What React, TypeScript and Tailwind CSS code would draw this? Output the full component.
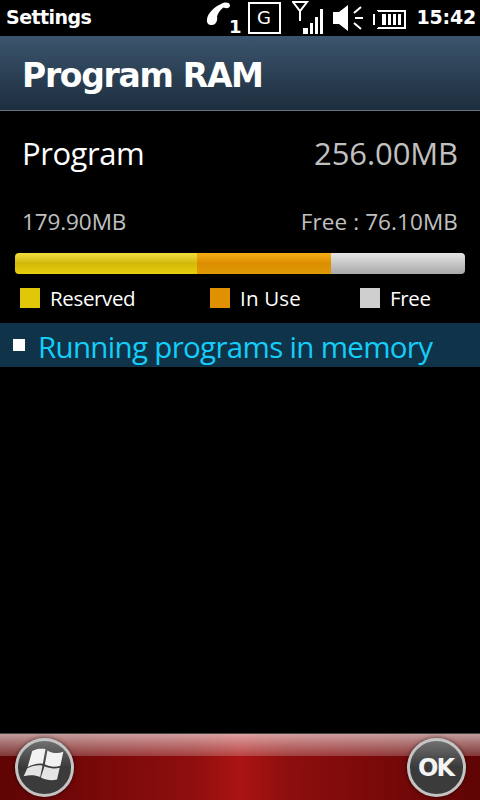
export default function App() {
  return (
    <div className="w-[480px] h-[800px] bg-black flex flex-col overflow-hidden font-['Open_Sans',sans-serif] text-white">
      {/* status bar */}
      <div className="h-[36px] flex items-center justify-between pl-[6px] pr-[4px] shrink-0">
        <span className="font-['DejaVu_Sans',sans-serif] font-bold text-[19px] leading-none tracking-[-0.55px] mb-[2px] text-white">Settings</span>
        <div className="flex items-center h-full">
          <svg width="36" height="36" viewBox="0 0 36 36" className="mr-[7px]">
            <path d="M16 4 C20 2 24 2 25 5 C25.5 8 22 9 18.5 7.5 C15 10 13 13 12 16.5 C13 20 11 25 7 25 C3 25 1.5 23 2 19 C3 13 9 7 16 4 Z" fill="#fff" />
            <text x="24" y="33" fill="#fff" fontSize="18" fontWeight="700" fontFamily="'DejaVu Sans',sans-serif">1</text>
          </svg>
          <div className="w-[33px] h-[32px] border-2 border-white flex items-center justify-center mr-[11px] mb-[1px]">
            <span className="font-['DejaVu_Sans',sans-serif] text-[18px] leading-none">G</span>
          </div>
          <svg width="33" height="36" viewBox="0 0 33 36" className="mr-[8px]">
            <path d="M1 2 H15 L8 11 Z M8 11 V21" fill="none" stroke="#fff" strokeWidth="2" />
            <rect x="11" y="28" width="5" height="6" fill="#fff" />
            <rect x="18" y="23" width="3" height="11" fill="#fff" />
            <rect x="23" y="17" width="3" height="17" fill="#fff" />
            <rect x="28" y="9" width="3" height="25" fill="#fff" />
          </svg>
          <svg width="31" height="36" viewBox="0 0 31 36" className="mr-[9px]">
            <path d="M0 12 H6 L15 5 V31 L6 24 H0 Z" fill="#fff" />
            <path d="M21 13 L28 7 M22 18 H30 M21 23 L28 29" fill="none" stroke="#fff" strokeWidth="2" />
          </svg>
          <svg width="34" height="36" viewBox="0 0 34 36" className="mr-[10px]">
            <path d="M5 11 H32 V28 H5 M1 14 V25 M5 10 V11 M5 28 V29" fill="none" stroke="#fff" strokeWidth="2" />
            <rect x="9" y="14" width="4" height="11" fill="#fff" />
            <rect x="15" y="14" width="3" height="11" fill="#fff" />
            <rect x="20" y="14" width="3" height="11" fill="#fff" />
            <rect x="25" y="14" width="3" height="11" fill="#fff" />
          </svg>
          <span className="font-['DejaVu_Sans',sans-serif] font-bold text-[19px] leading-none tracking-[-0.2px] mb-[2px] text-white">15:42</span>
        </div>
      </div>

      {/* header */}
      <div className="h-[75px] shrink-0 flex items-center pl-[22px] pt-[5px] bg-gradient-to-b from-[#3c556e] to-[#1d2e3e] border-b border-b-[#62717d]">
        <span className="font-['DejaVu_Sans',sans-serif] font-bold text-[33px] leading-none tracking-[-1.3px]">Program RAM</span>
      </div>

      {/* program row */}
      <div className="h-[58px] mt-[13px] shrink-0 px-[22px] flex items-center justify-between text-[31px] leading-none">
        <span className="tracking-[-0.45px]">Program</span>
        <span className="text-[#c0c0c0] tracking-[-0.1px]">256.00MB</span>
      </div>

      <div className="h-[30px] mt-[25px] shrink-0 px-[22px] flex items-center justify-between text-[22.5px] leading-none text-[#c0c0c0]">
        <span className="tracking-[-0.1px]">179.90MB</span>
        <span className="tracking-[0.1px]">Free : 76.10MB</span>
      </div>

      {/* bar */}
      <div className="mt-[16px] mx-[15px] h-[21px] shrink-0 flex rounded-[4px] overflow-hidden">
        <div className="w-[182px] bg-gradient-to-b from-[#f2de3c] via-[#d2b806] to-[#e8d00e]" />
        <div className="w-[134px] bg-gradient-to-b from-[#f5ad14] via-[#dc8e00] to-[#e09a08]" />
        <div className="flex-1 bg-gradient-to-b from-[#e6e6e6] to-[#a8a8a8]" />
      </div>

      {/* legend */}
      <div className="mt-[14px] h-[20px] shrink-0 flex items-center text-[20.5px] leading-none tracking-[-0.35px]">
        <div className="w-[20px] h-[20px] ml-[20px] bg-[#e0c808]" />
        <span className="ml-[10px] w-[160px]">Reserved</span>
        <div className="w-[20px] h-[20px] bg-[#e09000]" />
        <span className="ml-[10px] w-[120px] tracking-[0.2px]">In Use</span>
        <div className="w-[20px] h-[20px] bg-[#cfcfcf]" />
        <span className="ml-[10px]">Free</span>
      </div>

      {/* section */}
      <div className="mt-[15px] h-[44px] shrink-0 bg-[#0f3349] flex items-center pl-[13px]">
        <div className="w-[12px] h-[12px] bg-white mb-[1px]" />
        <span className="ml-[13px] pt-[4px] text-[29.5px] leading-none text-[#15cdf7] tracking-[-0.68px]">Running programs in memory</span>
      </div>

      <div className="flex-1" />

      {/* bottom bar */}
      <div className="h-[67px] shrink-0 flex items-center justify-between pl-[15px] pr-[14px] pt-[1px] border-t border-t-[#444444] bg-[linear-gradient(to_right,#600404_0%,#7e0a0a_25%,#8e0e0e_40%,#ab1414_50%,#8e0e0e_60%,#7e0a0a_75%,#600404_100%)] relative">
        <div className="absolute left-0 right-0 top-0 h-[22px] bg-gradient-to-b from-[rgba(255,255,255,0.6)] to-[rgba(255,255,255,0.2)]" />
        <div className="relative w-[59px] h-[59px] rounded-full border-[3px] border-[#c4c4c4] shadow-[0_0_4px_rgba(0,0,0,0.6)] bg-gradient-to-b from-[#707070] via-[#3a3a3a] to-[#3c3c3c] flex items-center justify-center">
          <svg width="43" height="35" viewBox="35 40 130 105" className="mb-[6px] mr-[3px]">
            <path d="M66 52 C80 44 92 44 106 46 L98 90 C82 88 68 92 52 100 Z" fill="#f2f2f2" />
            <path d="M112 50 C128 60 145 60 160 54 L151 96 C135 102 118 100 104 92 Z" fill="#f2f2f2" />
            <path d="M51 104 C66 97 82 93 97 96 L90 130 C74 124 58 124 40 128 Z" fill="#e4e4e4" />
            <path d="M103 98 C118 105 135 106 149 102 L141 138 C125 143 108 140 92 132 Z" fill="#e4e4e4" />
          </svg>
        </div>
        <div className="relative w-[59px] h-[59px] rounded-full border-[3px] border-[#c4c4c4] shadow-[0_0_4px_rgba(0,0,0,0.6)] bg-gradient-to-b from-[#707070] via-[#3a3a3a] to-[#3c3c3c] flex items-center justify-center">
          <span className="font-['DejaVu_Sans',sans-serif] font-bold text-[24px] leading-none tracking-[-2px] mr-[2px] text-[#f4f4f4]">OK</span>
        </div>
      </div>
    </div>
  );
}
